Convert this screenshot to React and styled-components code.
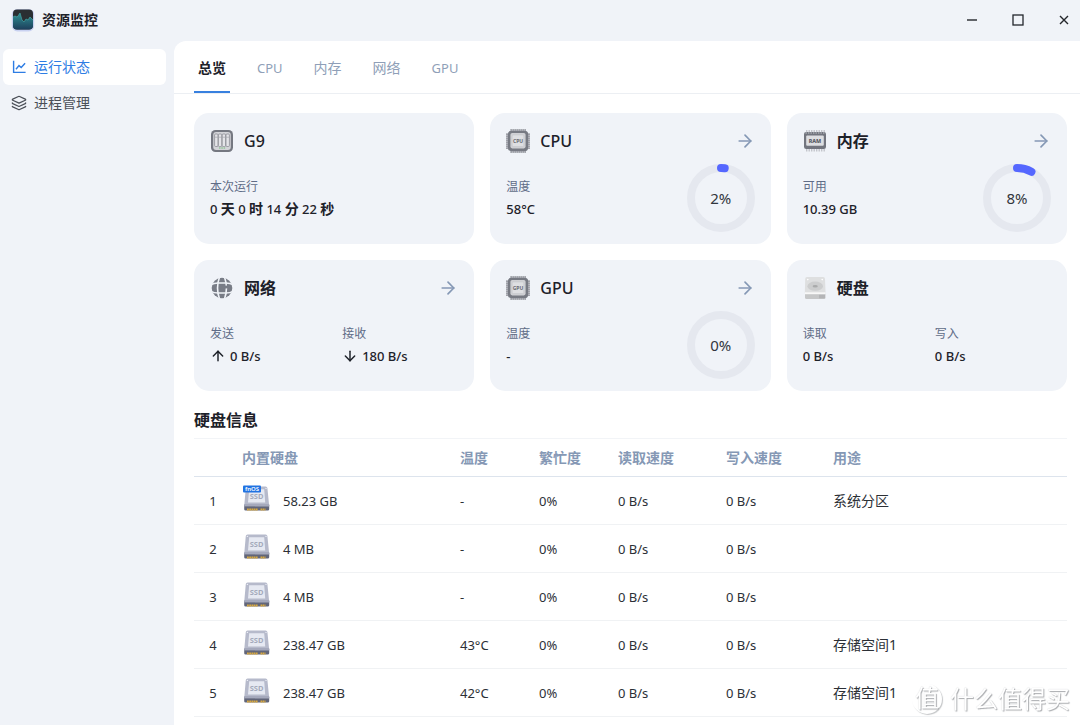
import React, { useState } from "react";
import styled, { createGlobalStyle } from "styled-components";
import { ArrowDown, ArrowRight, ArrowUp, Layers } from "lucide-react";

const GlobalStyle = createGlobalStyle`
  * {
    box-sizing: border-box;
  }

  body {
    margin: 0;
    background: #f0f3f8;
    color: #1d2129;
    font-family: "Noto Sans", "Noto Sans CJK SC", sans-serif;
    font-size: 14px;
    line-height: 20px;
  }

  button {
    border: 0;
    padding: 0;
    background: none;
    color: inherit;
    font: inherit;
    cursor: pointer;
  }
`;

const Page = styled.div`
  display: flex;
  flex-direction: column;
  min-height: 100vh;
`;

const TitleBar = styled.header`
  display: flex;
  align-items: center;
  height: 41px;
  padding: 0 0 2px 11px;
`;

const AppTitle = styled.h1`
  flex: 1;
  margin: 0 0 0 7px;
  font-size: 14px;
  font-weight: 700;
`;

const WindowButtons = styled.div`
  display: flex;
  gap: 14px;
`;

const WindowButton = styled.button`
  display: flex;
  align-items: center;
  justify-content: center;
  width: 32px;
  height: 32px;
`;

const Body = styled.div`
  display: flex;
  flex: 1;
`;

const Sidebar = styled.nav`
  flex: none;
  width: 174px;
  padding: 8px 8px 0 3px;
`;

const SideLink = styled.a`
  display: flex;
  align-items: center;
  gap: 7px;
  height: 36px;
  padding-left: 8px;
  border-radius: 6px;
  background: ${(props) => (props.$active ? "#fff" : "none")};
  color: ${(props) => (props.$active ? "#2e7de4" : "#4a4f57")};
  text-decoration: none;
`;

const Main = styled.main`
  flex: 1;
  min-width: 0;
  border-top-left-radius: 12px;
  background: #fff;
`;

const Tabs = styled.div`
  display: flex;
  gap: 23px;
  height: 53px;
  padding-left: 20px;
  border-bottom: 1px solid #eceff3;
`;

const Tab = styled.button`
  padding: 3px 4px 0;
  border-bottom: 2px solid ${(props) => (props.$active ? "#3880df" : "transparent")};
  color: ${(props) => (props.$active ? "#1d2129" : "#8f9fb8")};
  font-size: ${(props) => (props.$latin ? 13 : 14)}px;
  font-weight: ${(props) => (props.$active ? 700 : 400)};
`;

const Content = styled.div`
  padding: 19px 13px 8px 20px;
`;

const Cards = styled.div`
  display: grid;
  grid-template-columns: repeat(3, 1fr);
  gap: 16px;
`;

const Card = styled.section`
  padding: 16px 16px 12px;
  border-radius: 15px;
  background: #f0f3f8;
`;

const CardHeader = styled.div`
  display: flex;
  align-items: center;
  gap: 10px;
  height: 24px;
`;

const CardTitle = styled.h2`
  flex: 1;
  margin: 0;
  font-size: 16px;
  font-weight: ${(props) => (props.$latin ? 500 : 700)};
`;

const MoreButton = styled.button`
  display: flex;
  color: #8598b5;
`;

const CardBody = styled.div`
  display: flex;
  align-items: center;
  gap: 16px;
  height: 68px;
  margin-top: 11px;
`;

const Stat = styled.div`
  flex: 1;
`;

const StatLabel = styled.div`
  color: #5f6c87;
  font-size: 12px;
  line-height: 22px;
`;

const StatValue = styled.div`
  display: flex;
  align-items: center;
  gap: 4px;
  font-size: 13px;
  font-weight: 500;
  line-height: 22px;
`;

const Unit = styled.span`
  font-size: 14px;
  font-weight: 700;
`;

const RingBox = styled.div`
  display: grid;
  place-items: center;
  font-size: 15px;
  color: #32363d;

  > * {
    grid-area: 1 / 1;
  }
`;

const SectionTitle = styled.h2`
  margin: 17px 0 6px;
  font-size: 16px;
  font-weight: 700;
  line-height: 24px;
`;

const DiskTable = styled.table`
  width: 100%;
  table-layout: fixed;
  border-collapse: separate;
  border-spacing: 0;
`;

const HeadCell = styled.th`
  width: ${(props) => (props.$width ? `${props.$width}px` : "auto")};
  height: 39px;
  padding: 0;
  border-top: 1px solid #f2f4f7;
  border-bottom: 1px solid #dde4ed;
  color: #8598b5;
  font-weight: 600;
  text-align: left;
`;

const Cell = styled.td`
  height: 48px;
  padding: 0;
  border-bottom: 1px solid #f0f2f4;
  color: #2c3036;
  font-size: ${(props) => (props.$text ? 14 : 13)}px;
`;

const IndexCell = styled(Cell)`
  padding-right: 10px;
  text-align: center;
`;

const Disk = styled.div`
  display: flex;
  align-items: center;
  gap: 12px;
`;

const Watermark = styled.div`
  position: fixed;
  right: 10px;
  bottom: 10px;
  display: flex;
  align-items: center;
  gap: 8px;
  color: #fff;
  font-size: 24px;
  line-height: 32px;
  text-shadow: 1px 1px 1px #a9abae, 0 0 1px #c9cbce;
  pointer-events: none;
`;

const WatermarkBadge = styled.span`
  width: 30px;
  height: 30px;
  border-radius: 50%;
  box-shadow: 1px 1px 1px #c4c6c8;
  line-height: 28px;
  text-align: center;
`;

const AppLogo = () => (
  <svg width="24" height="24" viewBox="0 0 24 24">
    <defs>
      <linearGradient id="logoWave" x1="0" y1="0" x2="0" y2="1">
        <stop offset="0" stopColor="#2f9294" />
        <stop offset="1" stopColor="#1d3f5c" />
      </linearGradient>
    </defs>
    <rect x="0.8" y="1" width="22.4" height="22.4" rx="5.5" fill="#c9d2f1" />
    <rect x="2" y="1.4" width="20" height="20" rx="4" fill="#2a2f33" />
    <path
      d="M2 9l2-1 2 1 1-1 2-3 2 7 2 2 2-3 2 1 2-3 1 1 2 2v6a4 4 0 0 1-4 3.400H6a4 4 0 0 1-4-4z"
      fill="url(#logoWave)"
    />
    <path d="M2 9l2-1 2 1 1-1 2-3 2 7 2 2 2-3 2 1 2-3 1 1 2 2" fill="none" stroke="#43a2a3" strokeWidth="0.7" />
  </svg>
);

const StatusIcon = () => (
  <svg width="16" height="16" viewBox="0 0 16 16" fill="none" stroke="currentColor" strokeWidth="1.4">
    <path d="M2.600 1.800v11.600H14.600" />
    <path d="M5 10.200l3-3.600 2.200 1.900 3.900-4.300" />
  </svg>
);

const ServerIcon = () => (
  <svg width="24" height="24" viewBox="0 0 24 24">
    <rect x="1" y="1" width="22" height="22" rx="4.5" fill="#757881" />
    <rect x="3.200" y="3" width="17.600" height="18" rx="3" fill="#d3d4d8" />
    {[4.6, 8.4, 12.2, 16].map((x) => (
      <rect key={x} x={x} y="5" width="3.4" height="12.5" rx="1" fill="#e4e4e8" stroke="#8b8d94" strokeWidth="0.8" />
    ))}
    <path d="M5 8.2h14" stroke="#a3a5ab" strokeWidth="0.7" />
    <path d="M9 19h6.5" stroke="#74bd78" strokeWidth="1.2" strokeDasharray="1.5 0.8" />
  </svg>
);

const ChipIcon = ({ label }) => (
  <svg width="24" height="24" viewBox="0 0 24 24">
    <path
      d="M4.500 1.200h15.500M4.500 22.800h15.500M1.200 4.500v15.500M22.800 4.500v15.500"
      stroke="#868890"
      strokeWidth="2.400"
      strokeDasharray="1.2 0.8"
    />
    <rect x="1.800" y="1.800" width="20.400" height="20.400" rx="3.600" fill="#777a83" />
    <rect x="4.4" y="4" width="15.2" height="15.4" rx="1.8" fill="#cfd0d4" />
    <rect x="6.2" y="6" width="11.6" height="11.6" rx="1" fill="#dedfe2" stroke="#c3c4c9" strokeWidth="0.5" />
    <text x="12" y="13.8" textAnchor="middle" fontSize="5" fontWeight="700" fill="#666971">
      {label}
    </text>
  </svg>
);

const RamIcon = () => (
  <svg width="24" height="24" viewBox="0 0 24 24">
    <path d="M3 2.3h19M3 21.2h19" stroke="#c3c5cb" strokeWidth="2.6" strokeDasharray="1.4 1.1" />
    <rect x="1" y="3" width="22" height="17" rx="2.2" fill="#72757e" />
    <path d="M2.5 4h19" stroke="#a8aab1" strokeWidth="1.4" strokeDasharray="1.4 1.1" />
    <rect x="3.2" y="6.4" width="17.6" height="10.4" rx="1" fill="#dddee1" />
    <text x="12" y="13.6" textAnchor="middle" fontSize="5.4" fontWeight="800" fill="#54575f">
      RAM
    </text>
  </svg>
);

const GlobeIcon = () => (
  <svg width="24" height="24" viewBox="0 0 24 24">
    <circle cx="12" cy="12" r="10.3" fill="#787c86" />
    <g fill="none" stroke="#f0f3f8" strokeWidth="1.6">
      <path d="M9.500 1C7 8 7 16 9.500 23M14.500 1c2.500 7 2.500 15 0 22" />
      <path d="M1 8.600c3-1.600 4.800-1.600 7-1.600h8c2.200 0 4 0 7 1.600M1 15.400c3 1.600 4.800 1.600 7 1.600h8c2.200 0 4 0 7-1.600" />
    </g>
    <path d="M14 9.600h6.600v2.800H14z" fill="#787c86" />
  </svg>
);

const DriveIcon = () => (
  <svg width="24" height="24" viewBox="0 0 24 24">
    <path d="M4 1h16a2 2 0 0 1 2 2l.6 14H1.800L2.2 3a2 2 0 0 1 1.8-2z" fill="#dedfe0" />
    <rect x="2" y="16.5" width="20.5" height="6.5" rx="1.5" fill="#c6c7c8" />
    <path d="M2 16.2h20.500v2H2z" fill="#f8f8f8" />
    <path d="M17 18.8v3.500M19 18.8v3.500M21 18.8v3.500" stroke="#9a9b9c" strokeWidth="0.8" />
    <ellipse cx="12.2" cy="10.2" rx="7.8" ry="4.6" fill="#cccdce" />
    <ellipse cx="12.2" cy="10.2" rx="2.6" ry="1.2" fill="#a9aaab" />
    <g fill="#fff">
      <circle cx="4.8" cy="3.6" r="0.8" />
      <circle cx="19.2" cy="3.6" r="0.8" />
    </g>
  </svg>
);

const SsdIcon = ({ system }) => (
  <svg width="29" height="32" viewBox="0 0 29 32">
    <path d="M5.6 1.400h18a1.8 1.8 0 0 1 1.8 1.6L27.200 21H2.200L3.8 3A1.8 1.8 0 0 1 5.6 1.400z" fill="#b6bacb" />
    <path d="M2.200 20h25v4.200a1.4 1.4 0 0 1-1.4 1.400H3.600a1.4 1.4 0 0 1-1.400-1.400z" fill="#62667a" />
    <path d="M2.200 19h25v2.400h-25z" fill="#a5a9bc" />
    <path d="M5 24.400h11M18.500 24.400h5" stroke="#d9a93f" strokeWidth="2" strokeDasharray="1.8 0.4" />
    <path d="M7.200 4.200h15l1 13.400H6z" fill="#e6e9f2" />
    <g fill="#eceef5">
      <circle cx="5.400" cy="3.400" r="0.7" />
      <circle cx="24" cy="3.400" r="0.7" />
    </g>
    <text x="14.600" y="14.200" textAnchor="middle" fontSize="7.500" fontWeight="700" fill="#a4a9bb">
      SSD
    </text>
    {system && (
      <>
        <rect x="1" y="0.600" width="18" height="7" rx="1" fill="#2173e2" />
        <text x="10" y="6.400" textAnchor="middle" fontSize="6" fontWeight="600" fill="#fff">
          fnOS
        </text>
      </>
    )}
  </svg>
);

const Ring = ({ percent }) => {
  const length = 2 * Math.PI * 30;
  return (
    <RingBox>
      <svg width="68" height="68" viewBox="0 0 68 68" fill="none" strokeWidth="8">
        <circle cx="34" cy="34" r="30" stroke="#e5e8ef" />
        {percent > 0 && (
          <circle
            cx="34"
            cy="34"
            r="30"
            stroke="#5567ff"
            strokeLinecap="round"
            strokeDasharray={`${(length * percent) / 100} ${length}`}
            transform="rotate(-90 34 34)"
          />
        )}
      </svg>
      <span>{percent}%</span>
    </RingBox>
  );
};

const Uptime = () => (
  <span>
    0 <Unit>天</Unit> 0 <Unit>时</Unit> 14 <Unit>分</Unit> 22 <Unit>秒</Unit>
  </span>
);

const cards = [
  { title: "G9", latin: true, icon: <ServerIcon />, stats: [["本次运行", <Uptime />]] },
  { title: "CPU", latin: true, icon: <ChipIcon label="CPU" />, more: true, stats: [["温度", "58°C"]], percent: 2 },
  { title: "内存", icon: <RamIcon />, more: true, stats: [["可用", "10.39 GB"]], percent: 8 },
  {
    title: "网络",
    icon: <GlobeIcon />,
    more: true,
    stats: [
      ["发送", "0 B/s", ArrowUp],
      ["接收", "180 B/s", ArrowDown],
    ],
  },
  { title: "GPU", latin: true, icon: <ChipIcon label="GPU" />, more: true, stats: [["温度", "-"]], percent: 0 },
  {
    title: "硬盘",
    icon: <DriveIcon />,
    stats: [
      ["读取", "0 B/s"],
      ["写入", "0 B/s"],
    ],
  },
];

const tabs = ["总览", "CPU", "内存", "网络", "GPU"];

const disks = [
  { size: "58.23 GB", temp: "-", usage: "系统分区", system: true },
  { size: "4 MB", temp: "-", usage: "" },
  { size: "4 MB", temp: "-", usage: "" },
  { size: "238.47 GB", temp: "43°C", usage: "存储空间1" },
  { size: "238.47 GB", temp: "42°C", usage: "存储空间1" },
];

const StatusCard = ({ title, latin, icon, more, stats, percent }) => (
  <Card>
    <CardHeader>
      {icon}
      <CardTitle $latin={latin}>{title}</CardTitle>
      {more && (
        <MoreButton type="button" aria-label={`${title} 详情`}>
          <ArrowRight size={20} strokeWidth={2} />
        </MoreButton>
      )}
    </CardHeader>
    <CardBody>
      {stats.map(([label, value, Icon]) => (
        <Stat key={label}>
          <StatLabel>{label}</StatLabel>
          <StatValue>
            {Icon && <Icon size={16} strokeWidth={2.2} />}
            {value}
          </StatValue>
        </Stat>
      ))}
      {percent !== undefined && <Ring percent={percent} />}
    </CardBody>
  </Card>
);

const App = () => {
  const [tab, setTab] = useState("总览");

  return (
    <Page>
      <GlobalStyle />
      <TitleBar>
        <AppLogo />
        <AppTitle>资源监控</AppTitle>
        <WindowButtons>
          <WindowButton type="button" aria-label="最小化">
            <svg width="12" height="12" viewBox="0 0 12 12" stroke="#23262b" strokeWidth="1.4">
              <path d="M1 6h10" />
            </svg>
          </WindowButton>
          <WindowButton type="button" aria-label="最大化">
            <svg width="12" height="12" viewBox="0 0 12 12" fill="none" stroke="#23262b" strokeWidth="1.3">
              <rect x="1" y="1" width="10" height="10" />
            </svg>
          </WindowButton>
          <WindowButton type="button" aria-label="关闭">
            <svg width="12" height="12" viewBox="0 0 12 12" stroke="#23262b" strokeWidth="1.4">
              <path d="M2 2l8 8M10 2l-8 8" />
            </svg>
          </WindowButton>
        </WindowButtons>
      </TitleBar>
      <Body>
        <Sidebar>
          <SideLink href="#status" $active>
            <StatusIcon />
            运行状态
          </SideLink>
          <SideLink href="#process">
            <Layers size={16} strokeWidth={1.9} />
            进程管理
          </SideLink>
        </Sidebar>
        <Main>
          <Tabs role="tablist">
            {tabs.map((name) => (
              <Tab
                key={name}
                type="button"
                role="tab"
                aria-selected={tab === name}
                $active={tab === name}
                $latin={/^[A-Z]+$/.test(name)}
                onClick={() => setTab(name)}
              >
                {name}
              </Tab>
            ))}
          </Tabs>
          <Content>
            <Cards>
              {cards.map((card) => (
                <StatusCard key={card.title} {...card} />
              ))}
            </Cards>
            <SectionTitle>硬盘信息</SectionTitle>
            <DiskTable>
              <thead>
                <tr>
                  <HeadCell $width={48} aria-label="序号" />
                  <HeadCell $width={218}>内置硬盘</HeadCell>
                  <HeadCell $width={79}>温度</HeadCell>
                  <HeadCell $width={79}>繁忙度</HeadCell>
                  <HeadCell $width={108}>读取速度</HeadCell>
                  <HeadCell $width={107}>写入速度</HeadCell>
                  <HeadCell>用途</HeadCell>
                </tr>
              </thead>
              <tbody>
                {disks.map((disk, i) => (
                  <tr key={i}>
                    <IndexCell>{i + 1}</IndexCell>
                    <Cell>
                      <Disk>
                        <SsdIcon system={disk.system} />
                        {disk.size}
                      </Disk>
                    </Cell>
                    <Cell>{disk.temp}</Cell>
                    <Cell>0%</Cell>
                    <Cell>0 B/s</Cell>
                    <Cell>0 B/s</Cell>
                    <Cell $text>{disk.usage}</Cell>
                  </tr>
                ))}
              </tbody>
            </DiskTable>
          </Content>
        </Main>
      </Body>
      <Watermark>
        <WatermarkBadge>值</WatermarkBadge>
        <span>什么值得买</span>
      </Watermark>
    </Page>
  );
};

export default App;
